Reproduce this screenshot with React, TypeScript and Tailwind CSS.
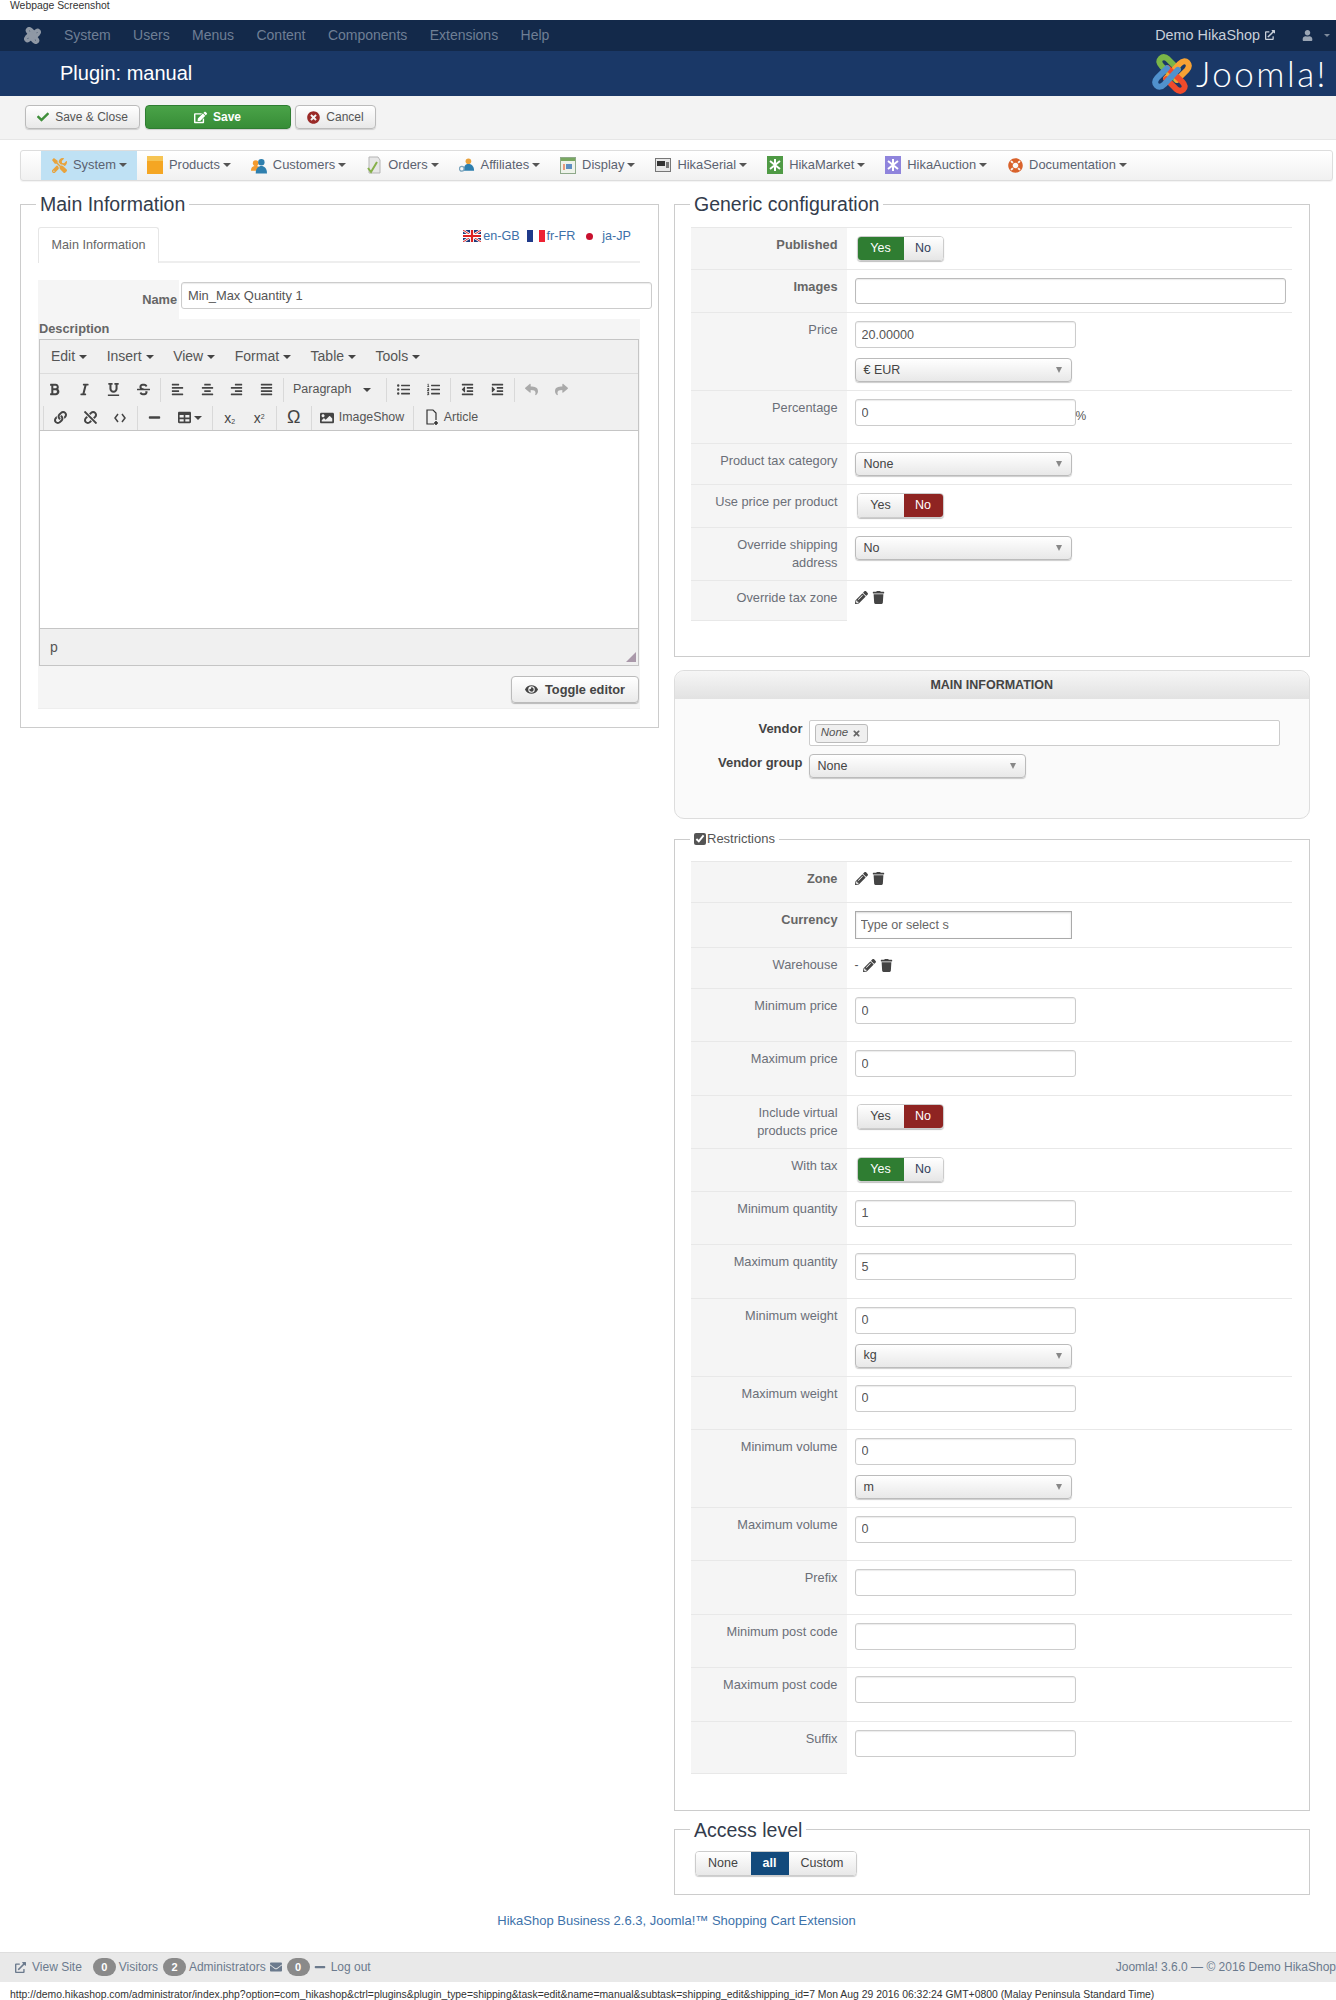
import React from 'react';
import {
  FaAlignCenter, FaAlignJustify, FaAlignLeft, FaAlignRight, FaBold, FaCheck, FaEdit, FaEnvelope, FaExternalLinkAlt, FaEye,
  FaImage, FaIndent, FaItalic, FaLifeRing, FaLink, FaListOl, FaListUl, FaMinus, FaOutdent, FaPencilAlt,
  FaReply, FaShare, FaStrikethrough, FaTable, FaTimes, FaTimesCircle,
  FaTools, FaTrash, FaUnderline, FaUnlink, FaUser,
} from 'react-icons/fa';

const Caret = () => (
  <span className="inline-block ml-[3px] w-0 h-0 border-x-[4px] border-x-transparent border-t-[4px] border-t-[#555]" />
);

// the four interlocked links of the Joomla mark
const JoomlaMark = ({ size, colors, stroke = 13 }: { size: number; colors: string[]; stroke?: number }) => (
  <svg width={size} height={size} viewBox="0 0 100 100" fill="none" strokeWidth={stroke} strokeLinecap="round">
    {colors.map((c, i) => (
      <path
        key={i}
        d="M60 64 L26 32 Q15 21 23 13 Q31 6 41 15 L64 38"
        stroke={c}
        transform={`rotate(${i * 90} 50 50)`}
      />
    ))}
  </svg>
);

const Box = ({ bg, star }: { bg: string; star: string }) => (
  <svg width="16" height="18" viewBox="0 0 16 18">
    <rect width="16" height="18" fill={bg} />
    <path d="M8 3v12M3 5l10 8M13 5L3 13" stroke={star} strokeWidth="2" />
  </svg>
);

const menuItems: { label: string; icon: React.ReactNode; active?: boolean }[] = [
  { label: 'System', active: true, icon: <FaTools className="text-[#e8a33d] text-[15px]" /> },
  {
    label: 'Products',
    icon: (
      <svg width="16" height="18" viewBox="0 0 16 18">
        <rect y="0" width="16" height="5" fill="#f6c453" />
        <rect y="5" width="16" height="13" fill="#f5a623" />
      </svg>
    ),
  },
  {
    label: 'Customers',
    icon: (
      <svg width="17" height="17" viewBox="0 0 17 17">
        <circle cx="5" cy="6" r="3" fill="#f29a2e" />
        <path d="M0 14c0-4 2-5 5-5s5 1 5 5z" fill="#f29a2e" />
        <circle cx="11" cy="5" r="3.4" fill="#2e7fae" />
        <path d="M5 17c0-6 3-8 6-8s6 2 6 8z" fill="#2e7fae" />
      </svg>
    ),
  },
  {
    label: 'Orders',
    icon: (
      <svg width="16" height="18" viewBox="0 0 16 18">
        <path d="M3 1h9l2 3v13H3z" fill="#e7e7e7" stroke="#b5b5b5" />
        <path d="M2 12l3 4 6-10" stroke="#86b04a" strokeWidth="2" fill="none" />
      </svg>
    ),
  },
  {
    label: 'Affiliates',
    icon: (
      <svg width="17" height="17" viewBox="0 0 17 17">
        <circle cx="10" cy="4" r="3" fill="#e9a13b" />
        <path d="M5 14c0-5 2-7 5-7s6 2 6 7z" fill="#2e7fae" />
        <circle cx="3" cy="12" r="2.5" fill="none" stroke="#7aa4bd" strokeWidth="1.4" />
      </svg>
    ),
  },
  {
    label: 'Display',
    icon: (
      <svg width="16" height="17" viewBox="0 0 16 17">
        <rect x="0.5" y="0.5" width="15" height="16" fill="#eef3ea" stroke="#8fa98a" />
        <rect x="1" y="1" width="14" height="3" fill="#79a861" />
        <rect x="6" y="7" width="6" height="5" fill="#5d8fc2" />
        <rect x="3" y="7" width="2" height="6" fill="#e79a7d" />
      </svg>
    ),
  },
  {
    label: 'HikaSerial',
    icon: (
      <svg width="16" height="14" viewBox="0 0 16 14">
        <rect x="0.5" y="0.5" width="15" height="13" fill="#e8e8e8" stroke="#777" />
        <rect x="2" y="3" width="8" height="5" fill="#333" />
        <rect x="11" y="4" width="3" height="6" fill="#777" />
      </svg>
    ),
  },
  { label: 'HikaMarket', icon: <Box bg="#4f9a45" star="#fff" /> },
  { label: 'HikaAuction', icon: <Box bg="#8f84dc" star="#fff" /> },
  { label: 'Documentation', icon: <FaLifeRing className="text-[#d9622b] text-[15px]" /> },
];

const Btn = ({ w = 'w-[29.5px]', children }: { w?: string; children?: React.ReactNode }) => (
  <div className={`${w} h-full shrink-0 flex items-center justify-center text-[#444] text-[13px]`}>{children}</div>
);

const Sep = () => <div className="w-px h-[24px] ml-[2px] mr-[2px] bg-[#d9d9d9] shrink-0" />;

const inputCls =
  'block border border-[#ccc] rounded-[3px] bg-white px-[6px] text-[12.6px] text-[#555] outline-none shadow-[inset_0_1px_1px_rgba(0,0,0,0.08)]';

const TextInput = ({ value = '', mb = 'mb-[17.4px]', w = 'w-[221px]' }: { value?: string; mb?: string; w?: string }) => (
  <input readOnly value={value} className={`${inputCls} ${w} ${mb} h-[27px]`} />
);

const Select = ({ value, mb = 'mb-[8px]', w = 'w-[217px]' }: { value: string; mb?: string; w?: string }) => (
  <div
    className={`${w} ${mb} h-[24px] flex items-center justify-between pl-[8px] pr-[9px] border border-[#bbb] rounded-[4px] bg-gradient-to-b from-white to-[#e8e8e8] shadow-[0_1px_1px_rgba(0,0,0,0.2)] text-[12.5px] text-[#444]`}
  >
    <span>{value}</span>
    <span className="w-0 h-0 border-x-[3.5px] border-x-transparent border-t-[6px] border-t-[#888]" />
  </div>
);

const Toggle = ({ yes, mb = 'mb-[9px]' }: { yes: boolean; mb?: string }) => (
  <div className={`flex w-[87px] h-[25px] ml-[2px] ${mb} rounded-[4px] text-[12.5px] shadow-[0_1px_1px_rgba(0,0,0,0.25)] overflow-hidden border border-[#ccc]`}>
    <div
      className={`w-[46px] flex items-center justify-center ${
        yes ? 'bg-[#2f7d32] text-white' : 'bg-gradient-to-b from-white to-[#e6e6e6] text-[#444]'
      }`}
    >
      Yes
    </div>
    <div
      className={`flex-1 flex items-center justify-center ${
        yes ? 'bg-gradient-to-b from-white to-[#e6e6e6] text-[#33415c]' : 'bg-[#8f2422] text-white'
      }`}
    >
      No
    </div>
  </div>
);

const EditIcons = ({ mb = 'mb-[16px]' }: { mb?: string }) => (
  <div className={`flex items-center gap-[4px] h-[16px] text-[#444] ${mb}`}>
    <FaPencilAlt className="text-[13px]" />
    <FaTrash className="text-[13px]" />
  </div>
);

const Row = ({
  label,
  bold,
  last,
  h,
  children,
}: {
  label: React.ReactNode;
  bold?: boolean;
  last?: boolean;
  h?: string;
  children?: React.ReactNode;
}) => (
  <div className={`flex border-t border-[#e8e8e8] ${h ?? ''}`}>
    <div
      className={`w-[156px] shrink-0 bg-[#f5f5f5] text-right pt-[8px] pb-[8px] pl-[6px] pr-[9px] text-[12.8px] leading-[18px] ${
        bold ? 'font-bold text-[#666]' : 'text-[#6b6f78]'
      } ${last ? 'border-b border-[#e8e8e8]' : ''}`}
    >
      {label}
    </div>
    <div className="flex-1 pt-[8px] pl-[8px] pr-[7px]">{children}</div>
  </div>
);

const Legend = ({ ml, children }: { ml: string; children: React.ReactNode }) => (
  <legend className={`${ml} px-[4px] h-[30px] leading-[30px] text-[19.5px] text-[#333c4c]`}>{children}</legend>
);

const H = 'h-[53.4px]';

export default function App() {
  return (
    <div className="w-full h-[2000px] overflow-hidden bg-white flex flex-col font-['Liberation_Sans',Arial,sans-serif]">
      {/* caption */}
      <div className="h-[20px] shrink-0 pl-[10px] text-[10.4px] leading-[11px] text-[#333]">Webpage Screenshot</div>

      {/* admin menu */}
      <div className="h-[31px] shrink-0 bg-[#13294a] flex items-center text-[14px] text-[#6f7f95]">
        <div className="ml-[24px] mr-[23px] w-[17px]">
          <JoomlaMark size={17} stroke={20} colors={['#8f98a5', '#8f98a5', '#8f98a5', '#8f98a5']} />
        </div>
        <div className="flex gap-[22.4px]">
          {['System', 'Users', 'Menus', 'Content', 'Components', 'Extensions', 'Help'].map((m) => (
            <span key={m}>{m}</span>
          ))}
        </div>
        <div className="ml-auto flex items-center text-[14.4px] text-[#c9d0da] pr-[6px]">
          <span>Demo HikaShop</span>
          <FaExternalLinkAlt className="ml-[5px] text-[10px]" />
          <FaUser className="ml-[27px] text-[11px] text-[#9aa5b4]" />
          <span className="ml-[11px] w-0 h-0 border-x-[3px] border-x-transparent border-t-[3px] border-t-[#7f8b9c]" />
        </div>
      </div>

      {/* title */}
      <div className="h-[45px] shrink-0 bg-[#1a3867] flex items-center pl-[60px] pr-[8px]">
        <h1 className="text-[20px] -mt-px text-white">Plugin: manual</h1>
        <div className="ml-auto flex items-center gap-[3px]">
          <JoomlaMark size={42} stroke={14} colors={['#7ab648', '#f7a234', '#ef4b2b', '#5091cd']} />
          <span className="font-['Lato',sans-serif] font-light text-[35px] leading-[35px] text-white tracking-[2.5px]">
            Joomla!
          </span>
        </div>
      </div>

      {/* toolbar */}
      <div className="h-[44px] shrink-0 bg-[#f3f3f3] border-b border-[#e6e6e6] flex items-start pt-[9px] pl-[25px] gap-[4.5px] text-[12px]">
        <div className="w-[115px] h-[24px] flex items-center justify-center gap-[6px] rounded-[4px] border border-[#bbb] bg-gradient-to-b from-white to-[#e8e8e8] text-[#555] shadow-[0_1px_1px_rgba(0,0,0,0.15)]">
          <FaCheck className="text-[#3f8f3a] text-[12px]" />
          Save &amp; Close
        </div>
        <div className="w-[146px] h-[24px] flex items-center justify-center gap-[6px] rounded-[4px] border border-[#2f7d32] bg-gradient-to-b from-[#4aa348] to-[#378d37] text-white font-bold shadow-[0_1px_1px_rgba(0,0,0,0.15)]">
          <FaEdit className="text-[13px]" />
          Save
        </div>
        <div className="w-[81px] h-[24px] flex items-center justify-center gap-[6px] rounded-[4px] border border-[#bbb] bg-gradient-to-b from-white to-[#e8e8e8] text-[#555] shadow-[0_1px_1px_rgba(0,0,0,0.15)]">
          <FaTimesCircle className="text-[#9a2a28] text-[13px]" />
          Cancel
        </div>
      </div>

      {/* HikaShop menu */}
      <div className="h-[31px] shrink-0 mt-[10px] ml-[20px] mr-[3px] pl-[20px] flex items-stretch rounded-[3px] border border-[#ddd] bg-gradient-to-b from-white to-[#f1f1f1] text-[12.9px] text-[#5b6270] shadow-[0_1px_1px_rgba(0,0,0,0.05)]">
        {menuItems.map((it) => (
          <div key={it.label} className={`flex items-center px-[10px] pb-px ${it.active ? 'bg-[#bfe1f4]' : ''}`}>
            <span className="w-[16px] mr-[6px] flex justify-center">{it.icon}</span>
            {it.label}
            <Caret />
          </div>
        ))}
      </div>

      {/* columns */}
      <div className="flex items-start mt-[8px] pl-[20px] gap-[14.5px] text-[#555]">
        {/* left */}
        <fieldset className="w-[639px] min-w-0 shrink-0 border border-[#ccc] pl-[17px] pr-[18px] pb-[18px] pt-[8px]">
          <Legend ml="-ml-[2px]">Main Information</Legend>
          <div className="flex items-start h-[36px] border-b-2 border-[#eee]">
            <div className="w-[121px] h-[36px] flex items-center justify-center border border-b-0 border-[#e6e6e6] rounded-t-[3px] bg-white text-[12.6px] text-[#666]">
              Main Information
            </div>
            <div className="ml-auto mr-[9px] flex items-center text-[12.6px] text-[#3d70a8]">
              <svg width="18" height="12" viewBox="0 0 18 12" className="mr-[2px]">
                <rect width="18" height="12" fill="#1f3a7a" />
                <path d="M0 0l18 12M18 0L0 12" stroke="#fff" strokeWidth="2.4" />
                <path d="M0 0l18 12M18 0L0 12" stroke="#d22" strokeWidth="1" />
                <path d="M9 0v12M0 6h18" stroke="#fff" strokeWidth="4" />
                <path d="M9 0v12M0 6h18" stroke="#d22" strokeWidth="2.2" />
              </svg>
              en-GB
              <span className="ml-[7px] mr-[2px] flex w-[18px] h-[12px]">
                <span className="w-1/3 bg-[#1f3a8a]" />
                <span className="w-1/3 bg-white" />
                <span className="w-1/3 bg-[#ee2233]" />
              </span>
              fr-FR
              <span className="ml-[11px] mr-[9px] w-[7px] h-[7px] rounded-full bg-[#c8102e]" />
              ja-JP
            </div>
          </div>

          <div className="flex h-[39px] mt-[17px] items-start">
            <div className="w-[141px] h-full shrink-0 bg-[#f5f5f5] text-right pr-[2px] pt-[12px] text-[12.8px] leading-[15px] font-bold text-[#666]">
              Name
            </div>
            <input
              readOnly
              value="Min_Max Quantity 1"
              className={`${inputCls} w-[471px] shrink-0 h-[27px] ml-[2px] mt-[2px] !text-[12.9px]`}
            />
          </div>

          <div className="bg-[#f5f5f5] border-b border-[#eee] w-[602px] h-[390px]">
            <div className="h-[20px] pl-px text-[12.8px] leading-[20px] font-bold text-[#666]">Description</div>
            <div className="w-[600px] ml-px border border-[#c5c5c5] bg-[#f0f0f0]">
              <div className="h-[34px] flex items-center pl-[11px] gap-[19.5px] border-b border-[#dcdcdc] text-[14px] text-[#555]">
                {['Edit', 'Insert', 'View', 'Format', 'Table', 'Tools'].map((m) => (
                  <span key={m} className="flex items-center">
                    {m}
                    <span className="ml-[4px] w-0 h-0 border-x-[4px] border-x-transparent border-t-[4px] border-t-[#444]" />
                  </span>
                ))}
              </div>
              <div className="h-[31px] flex items-center">
                <Btn><FaBold /></Btn>
                <Btn><FaItalic /></Btn>
                <Btn><FaUnderline /></Btn>
                <Btn><FaStrikethrough /></Btn>
                <Sep />
                <Btn><FaAlignLeft /></Btn>
                <Btn><FaAlignCenter /></Btn>
                <Btn><FaAlignRight /></Btn>
                <Btn><FaAlignJustify /></Btn>
                <Sep />
                <div className="w-[98px] shrink-0 flex items-center justify-between pl-[7px] pr-[13px] text-[12.5px] text-[#555]">
                  Paragraph
                  <span className="w-0 h-0 border-x-[4px] border-x-transparent border-t-[4px] border-t-[#444]" />
                </div>
                <Sep />
                <Btn><FaListUl /></Btn>
                <Btn><FaListOl /></Btn>
                <Sep />
                <Btn><FaOutdent /></Btn>
                <Btn><FaIndent /></Btn>
                <Sep />
                <Btn><FaReply className="text-[#aaa]" /></Btn>
                <Btn><FaShare className="text-[#aaa]" /></Btn>
              </div>
              <div className="h-[26px] flex items-center pl-[1px] border-b border-[#c5c5c5]">
                <Sep />
                <Btn><FaLink /></Btn>
                <Btn><FaUnlink /></Btn>
                <Btn>
                  <svg width="12" height="10" viewBox="0 0 12 10" fill="none" stroke="#444" strokeWidth="1.5">
                    <path d="M4 1L1 5l3 4M8 1l3 4-3 4" />
                  </svg>
                </Btn>
                <Sep />
                <Btn><FaMinus /></Btn>
                <Btn w="w-[41px]">
                  <FaTable />
                  <span className="ml-[3px] w-0 h-0 border-x-[4px] border-x-transparent border-t-[4px] border-t-[#444]" />
                </Btn>
                <Sep />
                <Btn><span className="text-[14px] leading-none">x<sub className="text-[7px]">2</sub></span></Btn>
                <Btn><span className="text-[14px] leading-none">x<sup className="text-[7px]">2</sup></span></Btn>
                <Sep />
                <Btn><span className="text-[18px]">Ω</span></Btn>
                <Sep />
                <Btn w="w-[97px]">
                  <FaImage className="mr-[5px] text-[14px]" />
                  <span className="text-[12.4px] text-[#555]">ImageShow</span>
                </Btn>
                <Sep />
                <Btn w="w-[72px]">
                  <svg width="15" height="17" viewBox="0 0 15 17" className="mr-[4px]" fill="none" stroke="#333" strokeWidth="1.2">
                    <path d="M9 15H2V1h6l3 3v7" />
                    <path d="M11 12v4M9 14h4" strokeWidth="1.6" />
                  </svg>
                  <span className="text-[12.4px] text-[#555]">Article</span>
                </Btn>
              </div>
              <div className="h-[198px] bg-white border-b border-[#c5c5c5]" />
              <div className="relative h-[36px] flex items-center pl-[10px] text-[14px] text-[#555]">
                p
                <svg width="10" height="10" viewBox="0 0 10 10" className="absolute right-[2px] bottom-[3px]" fill="#a9a">
                  <path d="M10 0v10H0z" />
                </svg>
              </div>
            </div>
            <div className="flex justify-end mt-[10px]">
              <div className="w-[128px] h-[27px] mr-[1px] flex items-center justify-center gap-[7px] rounded-[4px] border border-[#bbb] bg-gradient-to-b from-white to-[#eaeaea] text-[12.8px] font-bold text-[#444] shadow-[0_1px_1px_rgba(0,0,0,0.25)]">
                <FaEye className="text-[13px]" />
                Toggle editor
              </div>
            </div>
          </div>
        </fieldset>

        {/* right */}
        <div className="w-[636.5px] shrink-0 flex flex-col">
          <fieldset className="min-w-0 border border-[#ccc] pl-[16px] pr-[17px] pb-[35px] pt-[8px]">
            <Legend ml="-ml-[0.5px]">Generic configuration</Legend>
            <Row label="Published" bold><Toggle yes mb="mb-[8px]" /></Row>
            <Row label="Images" bold>
              <input readOnly className={`${inputCls} w-[431px] h-[26px] mb-[8px] !border-[#bbb]`} />
            </Row>
            <Row label="Price">
              <TextInput value="20.00000" mb="mb-[10px]" />
              <Select value="€ EUR" />
            </Row>
            <Row label="Percentage">
              <div className="flex items-end">
                <TextInput value="0" mb="mb-[17px]" />
                <span className="mb-[18px] text-[12px]">%</span>
              </div>
            </Row>
            <Row label="Product tax category"><Select value="None" /></Row>
            <Row label="Use price per product"><Toggle yes={false} /></Row>
            <Row label={<>Override shipping<br />address</>}><Select value="No" /></Row>
            <Row label="Override tax zone" last><EditIcons /></Row>
          </fieldset>

          <div className="mt-[13px] h-[149px] rounded-[10px] border border-[#ddd] bg-[#fafafa]">
            <div className="h-[28px] rounded-t-[10px] bg-gradient-to-b from-[#f6f6f6] to-[#e2e2e2] flex items-center justify-center text-[12.5px] font-bold text-[#444]">
              MAIN INFORMATION
            </div>
            <div className="flex mt-[21px]">
              <div className="w-[134px] pr-[6px] text-right text-[13px] leading-[18px] font-bold text-[#444]">Vendor</div>
              <div className="w-[471px] h-[26px] flex items-center pl-[5px] border border-[#ccc] rounded-[2px] bg-white">
                <div className="w-[53px] h-[19px] flex items-center justify-center gap-[4px] rounded-[3px] border border-[#bbb] bg-[#efefef] text-[11.5px] italic text-[#555]">
                  None
                  <FaTimes className="text-[9px] text-[#666]" />
                </div>
              </div>
            </div>
            <div className="flex mt-[8px]">
              <div className="w-[134px] pr-[6px] text-right text-[13px] leading-[18px] font-bold text-[#444]">Vendor group</div>
              <Select value="None" mb="mb-0" />
            </div>
          </div>

          <fieldset className="mt-[10px] min-w-0 border border-[#ccc] pl-[16px] pr-[17px] pb-[36px] pt-[12px]">
            <legend className="-ml-[0.5px] px-[4px] h-[20px] flex items-center text-[13px] text-[#555]">
              <input type="checkbox" readOnly checked className="w-[12px] h-[12px] mr-px accent-[#555]" />
              Restrictions
            </legend>
            <Row label="Zone" bold><EditIcons /></Row>
            <Row label="Currency" bold>
              <div className="w-[217px] h-[28px] mb-[8px] flex items-center pl-[5px] border border-[#aaa] bg-white text-[12.6px] text-[#666] shadow-[inset_0_1px_2px_rgba(0,0,0,0.15)]">
                <span className="w-[88px] overflow-hidden whitespace-nowrap">Type or select some options</span>
              </div>
            </Row>
            <Row label="Warehouse">
              <div className="flex items-center">
                <span className="mr-[4px] mb-[14px] text-[12px]">-</span>
                <EditIcons mb="mb-[14px]" />
              </div>
            </Row>
            <Row label="Minimum price" h={H}><TextInput value="0" /></Row>
            <Row label="Maximum price" h={H}><TextInput value="0" /></Row>
            <Row label={<>Include virtual<br />products price</>}><Toggle yes={false} /></Row>
            <Row label="With tax"><Toggle yes /></Row>
            <Row label="Minimum quantity" h={H}><TextInput value="1" /></Row>
            <Row label="Maximum quantity" h={H}><TextInput value="5" /></Row>
            <Row label="Minimum weight">
              <TextInput value="0" mb="mb-[10px]" />
              <Select value="kg" />
            </Row>
            <Row label="Maximum weight" h={H}><TextInput value="0" /></Row>
            <Row label="Minimum volume">
              <TextInput value="0" mb="mb-[10px]" />
              <Select value="m" />
            </Row>
            <Row label="Maximum volume" h={H}><TextInput value="0" /></Row>
            <Row label="Prefix" h={H}><TextInput /></Row>
            <Row label="Minimum post code" h={H}><TextInput /></Row>
            <Row label="Maximum post code" h={H}><TextInput /></Row>
            <Row label="Suffix" h={H} last><TextInput /></Row>
          </fieldset>

          <fieldset className="mt-[4px] min-w-0 border border-[#ccc] pl-[20px] pb-[18px] pt-[6px]">
            <Legend ml="-ml-[4.5px]">Access level</Legend>
            <div className="flex w-[162px] h-[25px] rounded-[4px] border border-[#ccc] overflow-hidden text-[12.5px] text-[#444] shadow-[0_1px_1px_rgba(0,0,0,0.2)]">
              <div className="w-[55px] flex items-center justify-center bg-gradient-to-b from-white to-[#e8e8e8]">None</div>
              <div className="w-[38px] flex items-center justify-center bg-[#134a7c] text-white font-bold">all</div>
              <div className="flex-1 flex items-center justify-center bg-gradient-to-b from-white to-[#e8e8e8]">Custom</div>
            </div>
          </fieldset>
        </div>
      </div>

      {/* footer */}
      <div className="mt-[16px] h-[20px] leading-[20px] shrink-0 text-center text-[13px] text-[#3d72aa] ml-[17px]">
        HikaShop Business 2.6.3, Joomla!™ Shopping Cart Extension
      </div>
      <div className="mt-[21px] h-[30px] shrink-0 flex items-center pl-[15px] bg-[#e9e9e9] border-t border-[#dedede] text-[12px] text-[#6b7a8d] whitespace-nowrap overflow-hidden">
        <FaExternalLinkAlt className="text-[11px] mr-[6px]" />
        View Site
        <span className="ml-[11px] mr-[3px] w-[23px] h-[18px] rounded-full bg-[#8a8a8a] text-white text-[11px] font-bold flex items-center justify-center">0</span>
        Visitors
        <span className="ml-[5px] mr-[3px] w-[23px] h-[18px] rounded-full bg-[#8a8a8a] text-white text-[11px] font-bold flex items-center justify-center">2</span>
        Administrators
        <FaEnvelope className="ml-[4px] text-[12px]" />
        <span className="ml-[5px] mr-[4px] w-[23px] h-[18px] rounded-full bg-[#8a8a8a] text-white text-[11px] font-bold flex items-center justify-center">0</span>
        <FaMinus className="text-[12px] mr-[5px]" />
        Log out
        <span className="ml-auto">Joomla! 3.6.0 — © 2016 Demo HikaShop</span>
      </div>
      <div className="mt-[7px] pl-[10px] text-[10.4px] leading-[12px] text-[#333] whitespace-nowrap">
        http://demo.hikashop.com/administrator/index.php?option=com_hikashop&amp;ctrl=plugins&amp;plugin_type=shipping&amp;task=edit&amp;name=manual&amp;subtask=shipping_edit&amp;shipping_id=7 Mon Aug 29 2016 06:32:24 GMT+0800 (Malay Peninsula Standard Time)
      </div>
    </div>
  );
}
